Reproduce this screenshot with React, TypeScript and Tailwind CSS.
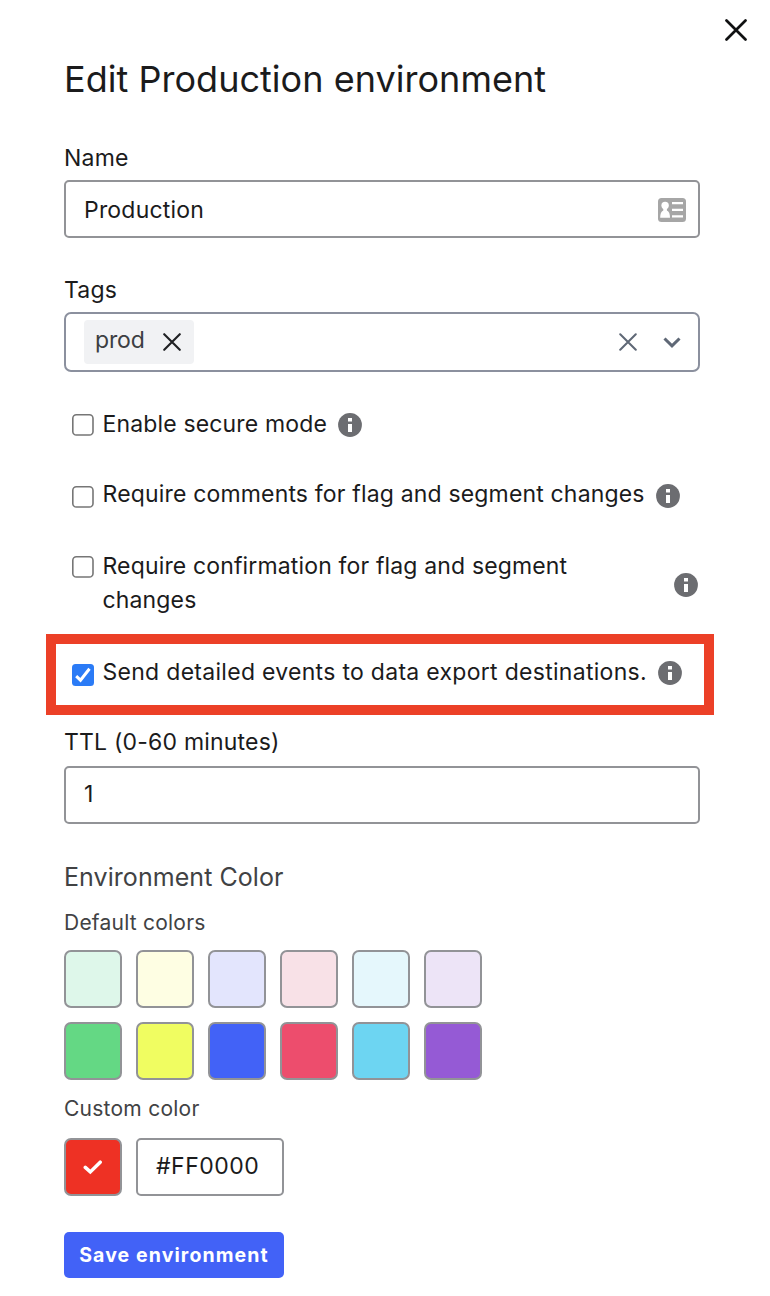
import type { ReactNode } from "react";

const pastel = ["bg-[#def7ea]", "bg-[#fefee3]", "bg-[#e3e5fd]", "bg-[#f8e1e7]", "bg-[#e5f7fc]", "bg-[#ede4f7]"];
const vivid = ["bg-[#64d884]", "bg-[#f0fd61]", "bg-[#4262f7]", "bg-[#ed4d6d]", "bg-[#6dd5f2]", "bg-[#955ad5]"];

function Cross({ className, width }: { className: string; width: number }) {
  return (
    <svg viewBox="0 0 22 22" className={className} fill="none" stroke="currentColor" strokeWidth={width} strokeLinecap="round">
      <path d="M1.5 1.5 20.5 20.5M20.5 1.5 1.5 20.5" />
    </svg>
  );
}

function Info({ className = "" }: { className?: string }) {
  return (
    <svg viewBox="0 0 24 24" className={`size-6 shrink-0 ${className}`}>
      <circle cx="12" cy="12" r="11.9" fill="#6c6d71" />
      <path d="M10 5h4v3.500h-4zM10 11h4v8h-4z" fill="#fff" />
    </svg>
  );
}

function Checkbox({ checked = false, className = "" }: { checked?: boolean; className?: string }) {
  return (
    <svg viewBox="0 0 22 22" className={`size-[22px] shrink-0 ${className}`}>
      {checked ? (
        <>
          <rect width="22" height="22" rx="3.5" fill="#2b7bf6" />
          <path d="M4.2 12.2 8.5 16.2 17.5 4.8" fill="none" stroke="#fff" strokeWidth="3" />
        </>
      ) : (
        <rect x="0.8" y="0.8" width="20.2" height="20.2" rx="3.6" fill="#fff" stroke="#767676" strokeWidth="1.6" />
      )}
    </svg>
  );
}

function Label({ children, className = "tracking-[0.2px]" }: { children: ReactNode; className?: string }) {
  return <div className={`h-8 text-[23px] leading-8 whitespace-nowrap ${className}`}>{children}</div>;
}

function Swatches({ colors }: { colors: string[] }) {
  return (
    <div className="flex gap-3.5">
      {colors.map((c) => (
        <button key={c} className={`size-[58px] rounded-[7px] border-2 border-[#929397] ${c}`} />
      ))}
    </div>
  );
}

export default function App() {
  return (
    <div className="flex h-[1296px] w-[770px] flex-col bg-white pr-[70px] pl-16 font-['Inter',sans-serif] text-[#1b1b1c]">
      <div className="-mr-[47px] flex h-[55px] justify-end pt-[19px]">
        <Cross className="size-[22px] text-[#101112]" width={2.7} />
      </div>
      <h1 className="mb-[39px] h-12 text-[36px] leading-[48px] tracking-[0.03px] whitespace-nowrap">Edit Production environment</h1>

      <Label>Name</Label>
      <div className="mt-1.5 flex h-[58px] items-center justify-between rounded-[5px] border-2 border-[#929397] pr-3 pl-[18px]">
        <span className="mt-0.5 text-[23px] tracking-[0.2px]">Production</span>
        <svg viewBox="0 0 28 24" className="mt-0.5 h-6 w-7">
          <rect width="28" height="24" rx="3.5" fill="#a6a6a6" />
          <path d="M14 4h11v2.2H14zM14 10.7h11v2.4H14zM14 17.2h11v2.3H14z" fill="#fff" />
          <circle cx="7.1" cy="7.5" r="3.7" fill="#fff" />
          <path d="M5.3 10h3.6v2.4c2.2 1 3.1 3.4 3.1 7.4H2.2c0-4 .9-6.4 3.1-7.4z" fill="#fff" />
        </svg>
      </div>

      <div className="mt-9">
        <Label>Tags</Label>
      </div>
      <div className="mt-1.5 flex h-[60px] items-center rounded-[7px] border-2 border-[#8b909e] pr-[17px] pl-[18px]">
        <div className="flex h-11 w-[110px] items-center justify-between rounded-[4px] bg-[#f1f2f4] pr-[13px] pl-[11px]">
          <span className="-mt-[3px] text-[23px] tracking-[-0.15px] text-[#3c3e42]">prod</span>
          <Cross className="size-[18px] text-[#202124]" width={2.6} />
        </div>
        <Cross className="mr-[26px] ml-auto size-[18px] text-[#5f6876]" width={2.5} />
        <svg viewBox="0 0 18 12" className="mt-0.5 h-3 w-[18px]" fill="none" stroke="#5f6876" strokeWidth="3">
          <path d="M1.5 1.5 9 8.9 16.5 1.5" />
        </svg>
      </div>

      <div className="mt-9 flex h-8 items-start pl-2">
        <Checkbox className="mt-1.5 mr-[8.5px]" />
        <Label className="tracking-[0.15px]">Enable secure mode</Label>
        <Info className="mt-[5px] ml-[11px]" />
      </div>
      <div className="mt-[38px] flex h-8 items-start pl-2">
        <Checkbox className="mt-2 mr-[8.5px]" />
        <Label className="tracking-[0.17px]">Require comments for flag and segment changes</Label>
        <Info className="mt-1.5 ml-[11px]" />
      </div>
      <div className="mt-[38px] flex h-[68px] items-start pl-2">
        <Checkbox className="mt-2 mr-[8.5px]" />
        <div className="mt-px w-[540px] text-[23px] leading-[34px] tracking-[0.15px]">Require confirmation for flag and segment changes</div>
        <Info className="mt-[25px] mr-0.5 ml-auto" />
      </div>

      <div className="-mr-[14px] -ml-[18px] mt-[18px] flex h-[81px] items-start border-[10px] border-[#ec4027] pt-3 pl-4">
        <Checkbox checked className="mt-2 mr-[8.5px]" />
        <Label className="tracking-[0.29px]">Send detailed events to data export destinations.</Label>
        <Info className="mt-[5px] ml-[11px]" />
      </div>

      <div className="mt-[11px]">
        <Label>TTL (0-60 minutes)</Label>
      </div>
      <div className="mt-2 flex h-[58px] items-center rounded-[5px] border-2 border-[#929397] pb-0.5 pl-[18px] text-[23px]">1</div>

      <h2 className="mt-[37px] h-8 text-[25px] leading-8 tracking-[0.06px] text-[#414244]">Environment Color</h2>
      <h3 className="mt-[15px] mb-3 h-[30px] text-[21px] leading-[30px] tracking-[0.22px] text-[#414244]">Default colors</h3>
      <div className="flex flex-col gap-3.5">
        <Swatches colors={pastel} />
        <Swatches colors={vivid} />
      </div>
      <h3 className="mt-[14px] mb-[14px] h-[30px] text-[21px] leading-[30px] tracking-[0.25px] text-[#414244]">Custom color</h3>
      <div className="flex gap-3.5">
        <button className="flex size-[58px] items-center justify-center rounded-[7px] border-2 border-[#929397] bg-[#ee3124]">
          <svg viewBox="0 0 20 16" className="h-4 w-5" fill="none" stroke="#fff" strokeWidth="3.5" strokeLinecap="round">
            <path d="M2.3 8.4 7.3 12.9 17.2 3.2" />
          </svg>
        </button>
        <div className="flex h-[58px] w-[148px] items-center rounded-[5px] border-2 border-[#929397] pb-0.5 pl-[18px] text-[23px] tracking-[0.5px]">#FF0000</div>
      </div>
      <button className="mt-9 h-[46px] w-[220px] rounded-[5px] bg-[#4262f7] pt-0.5 text-[19.5px] font-bold tracking-[1.1px] whitespace-nowrap text-white">Save environment</button>
    </div>
  );
}
